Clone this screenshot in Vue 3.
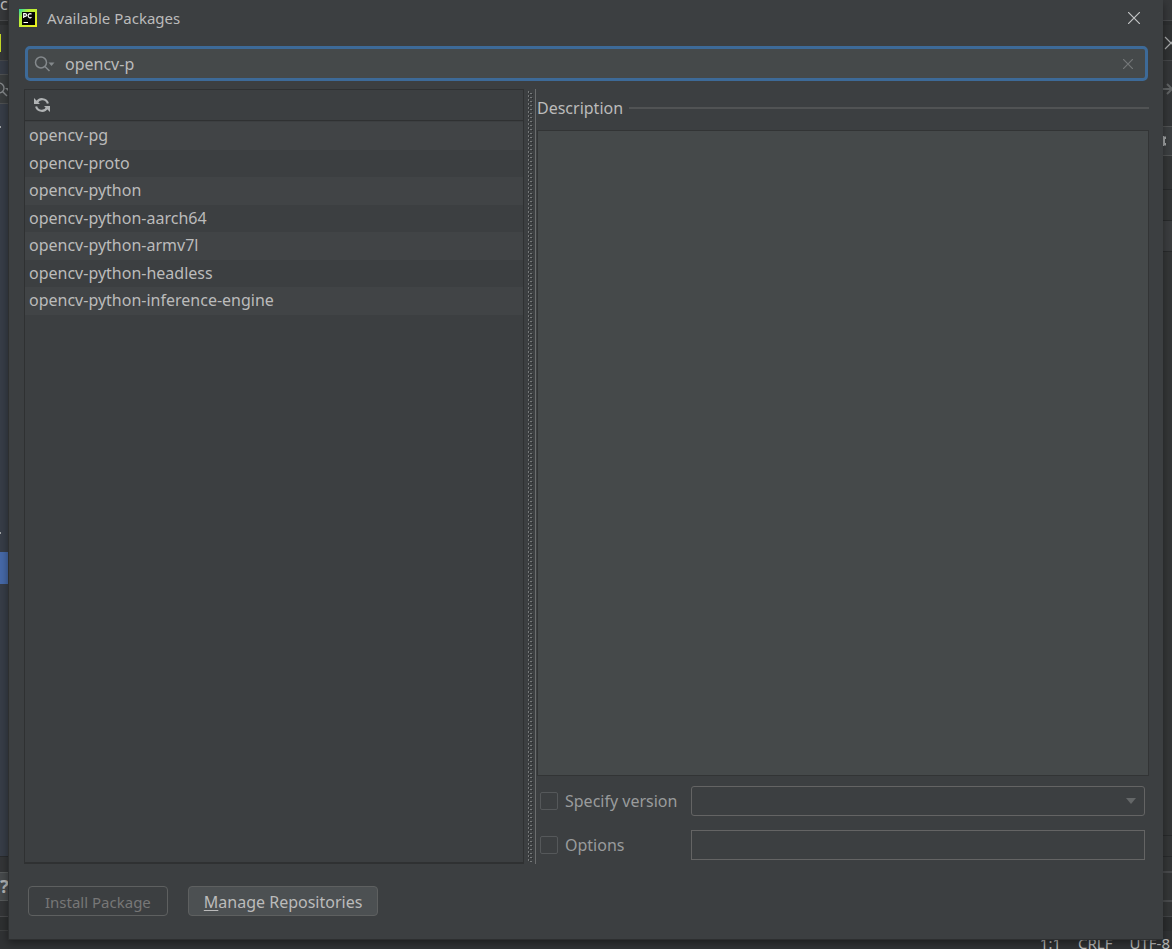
<script setup>
import { ref } from 'vue'

const query = ref('opencv-p')
const packages = [
  'opencv-pg',
  'opencv-proto',
  'opencv-python',
  'opencv-python-aarch64',
  'opencv-python-armv7l',
  'opencv-python-headless',
  'opencv-python-inference-engine',
]
</script>

<template>
  <div class="screen">
    <div class="backdrop" aria-hidden="true">
      <div class="back-main">
        <div class="edge left">
          <div class="l-title">c</div>
          <div class="l-gap"></div>
          <div class="l-tab"><i class="logo-sliver"></i></div>
          <div class="l-space"></div>
          <div class="l-search">
            <svg width="14" height="20" viewBox="0 0 14 20" fill="none" stroke="#85898b" stroke-width="1.4">
              <circle cx="-1" cy="8" r="5" />
              <path d="M2.500 11.500L7 16" />
              <path d="M5 8h6l-3 3z" fill="#85898b" stroke="none" />
            </svg>
          </div>
          <div class="l-tree"><i class="dot"></i></div>
          <div class="l-tree2"><i class="dot"></i></div>
          <div class="l-selected"></div>
          <div class="l-rest"></div>
          <div class="l-help"><span>?</span></div>
          <div class="l-foot"></div>
        </div>
        <div class="edge right">
          <div class="r-title"></div>
          <div class="l-gap"></div>
          <div class="r-close">
            <svg width="9" height="14" viewBox="0 0 9 14" fill="none" stroke="#a8aaab" stroke-width="1.2"><path d="M2 1l6 6-6 6M8 7l4-4M8 7l4 4" /></svg>
          </div>
          <div class="r-arrow">
            <svg width="9" height="14" viewBox="0 0 9 14" fill="none" stroke="#606364" stroke-width="2"><path d="M0 7h9M4 2l5 5-5 5" /></svg>
          </div>
          <div class="r-gear">
            <svg width="6" height="12" viewBox="0 0 6 12" fill="#a5a8a9"><path d="M0 1h1l1 1 1-1v3H2v4h1v3L2 10l-1 1H0z" /></svg>
          </div>
          <div class="r-a"></div>
          <div class="r-b"></div>
          <div class="r-c"></div>
          <div class="r-d"></div>
          <div class="r-e"></div>
          <div class="r-f"></div>
          <div class="r-g"></div>
          <div class="r-h"></div>
          <div class="r-i"></div>
        </div>
      </div>
      <div class="status"><span>1:1</span><span>CRLF</span><span>UTF-8</span></div>
    </div>

    <main class="dialog">
      <header class="titlebar">
        <svg class="app-icon" width="18" height="18" viewBox="0 0 18 18">
          <defs>
            <linearGradient id="frame" x1="0" y1="0" x2="1" y2="1">
              <stop offset="0" stop-color="#21d7a9" />
              <stop offset=".3" stop-color="#b5ee3a" />
              <stop offset="1" stop-color="#f3f01c" />
            </linearGradient>
          </defs>
          <rect width="18" height="18" fill="url(#frame)" />
          <rect x="3" y="3" width="13" height="13" fill="#050505" />
          <path d="M4.700 9V4.700h1.500a1.300 1.300 0 0 1 0 2.600H4.700M12.500 5.200a2 2 0 1 0 0 2.900M4.500 13.500h4.500" fill="none" stroke="#fff" stroke-width="1.200" />
        </svg>
        <h1>Available Packages</h1>
        <button class="close" aria-label="Close">
          <svg width="12" height="12" viewBox="0 0 12 12" fill="none" stroke="#c3c5c6" stroke-width="1.200"><path d="M0 0l12 12M12 0L0 12" /></svg>
        </button>
      </header>

      <div class="search">
        <svg width="22" height="18" viewBox="0 0 22 18" fill="none" stroke="#84898c" stroke-width="1.500">
          <circle cx="7" cy="7.500" r="5.500" />
          <path d="M11 11.500l4.500 4.500" />
          <path d="M14.500 7.500h6l-3 3.500z" fill="#84898c" stroke="none" />
        </svg>
        <input v-model="query" aria-label="Search packages" type="text" />
        <button aria-label="Clear search" @click="query = ''">
          <svg width="10" height="10" viewBox="0 0 10 10" fill="none" stroke="#747778" stroke-width="1.200"><path d="M0 0l10 10M10 0L0 10" /></svg>
        </button>
      </div>

      <div class="body">
        <section class="packages">
          <div class="toolbar">
            <button aria-label="Reload">
              <svg width="16" height="16" viewBox="0 0 16 16" fill="none" stroke="#b0b3b4" stroke-width="2.200">
                <path d="M2.800 5.500A6 6 0 0 1 13.900 6.500M13.200 10.500A6 6 0 0 1 2.100 9.500" />
                <path d="M0 1v6h6zM16 15V9H10z" fill="#b0b3b4" stroke="none" />
              </svg>
            </button>
          </div>
          <ul>
            <li v-for="name in packages" :key="name">{{ name }}</li>
          </ul>
        </section>

        <div class="splitter">
          <svg width="6" height="100%">
            <defs>
              <pattern id="grip" width="6" height="4" patternUnits="userSpaceOnUse">
                <path d="M0 0h1v2H0zM2 2h2v1H2z" fill="#76797a" />
                <path d="M1 1h1v1H1zM4 3h1v1H4z" fill="#292b2c" />
              </pattern>
            </defs>
            <rect width="6" height="100%" fill="url(#grip)" />
          </svg>
        </div>

        <section class="details">
          <h2>Description</h2>
          <div class="description"></div>
          <div class="option">
            <input id="version" type="checkbox" disabled />
            <label for="version">Specify version</label>
            <div class="combo">
              <select aria-label="Version" disabled></select>
              <svg width="10" height="6" viewBox="0 0 10 6"><path d="M0 0h10L5 6z" fill="#646768" /></svg>
            </div>
          </div>
          <div class="option">
            <input id="options" type="checkbox" disabled />
            <label for="options">Options</label>
            <input class="field" type="text" aria-label="Options value" disabled />
          </div>
        </section>
      </div>

      <footer>
        <button class="install" disabled>Install Package</button>
        <button class="manage"><u>M</u>anage Repositories</button>
      </footer>
    </main>
  </div>
</template>

<style>
body {
  background: #313335;
}
</style>

<style scoped>
* {
  box-sizing: border-box;
}
.screen {
  display: grid;
  grid-template: minmax(0, 1fr) / minmax(0, 1fr);
  height: 100vh;
  overflow: hidden;
  color: #bbbbbb;
  font: 16px/24px "Noto Sans", "Open Sans", sans-serif;
}
button, input, select {
  font: inherit;
  color: inherit;
  margin: 0;
  padding: 0;
  border: 0;
  background: none;
}
svg {
  display: block;
  flex: none;
}
.backdrop, .dialog {
  grid-area: 1 / 1;
}
.backdrop {
  display: flex;
  flex-direction: column;
  overflow: hidden;
  background: #313335;
}
.back-main {
  flex: 1;
  min-height: 0;
  display: flex;
  justify-content: space-between;
}
.edge {
  display: flex;
  flex-direction: column;
  width: 9px;
  overflow: hidden;
}
.edge > div {
  flex: none;
  overflow: hidden;
}
.l-title {
  height: 21px;
  background: #37393b;
  border-bottom: 1px solid #484a4c;
  line-height: 8px;
}
.r-title {
  height: 21px;
  background: #36383a;
  border-bottom: 1px solid #484a4c;
}
.l-gap {
  height: 4px;
  background: #2d2f30;
}
.l-tab {
  height: 36px;
  padding-top: 9px;
  background: #343638;
  border-bottom: 1px solid #454749;
}
.logo-sliver {
  display: block;
  width: 1px;
  height: 18px;
  background: #c5d926;
}
.l-space {
  height: 13px;
  background: #363c46;
}
.l-search {
  height: 30px;
  padding-top: 5px;
  background: #3a3d3e;
  border: solid #4e5051;
  border-width: 1px 0;
}
.l-tree {
  height: 406px;
  padding-top: 22px;
  background: #373d47;
}
.l-tree2 {
  height: 42px;
  padding-top: 22px;
  background: #373d47;
}
.dot {
  display: block;
  width: 1px;
  height: 2px;
  background: #a0a3a6;
}
.l-selected {
  height: 32px;
  background: #4669a8;
}
.edge .l-rest {
  flex: 1;
  background: #373d47;
  border-bottom: 1px solid #292b2d;
}
.l-help {
  height: 60px;
  padding-top: 15px;
  background: #333537;
  border-bottom: 1px solid #48494b;
}
.l-help span {
  display: block;
  height: 29px;
  background: #46494b;
  border: solid #56595a;
  border-width: 1px 0;
  color: #b0b2b3;
  font-size: 18px;
  font-weight: 700;
  line-height: 27px;
}
.l-foot {
  height: 14px;
  background: #2d2f30;
  border-bottom: 1px solid #3e4041;
}
.r-close {
  height: 36px;
  padding-top: 11px;
  background: #303233;
  border-bottom: 1px solid #454749;
}
.r-arrow {
  height: 65px;
  padding-top: 21px;
  background: #343638;
}
.r-gear {
  height: 30px;
  padding-top: 8px;
  background: #3c3f41;
  border: solid #515354;
  border-width: 1px 0;
}
.r-a, .r-b, .r-c, .r-e, .r-f {
  border-bottom: 1px solid #292b2c;
  background: #343637;
}
.r-a {
  height: 34px;
}
.r-b {
  height: 31px;
}
.r-c {
  height: 31px;
  background: #3b3d3f;
}
.edge .r-d {
  flex: 1;
  background: #343637;
}
.r-e {
  height: 1px;
}
.r-f {
  height: 21px;
}
.r-g {
  height: 16px;
  border-bottom: 2px solid #484a4c;
  background: #343637;
}
.r-h {
  height: 29px;
  border-bottom: 2px solid #4a4c4e;
  background: #343637;
}
.r-i {
  height: 29px;
  background: linear-gradient(#343637 14px, #434547 14px, #434547 15px, #2c2e2f 15px);
}
.status {
  display: flex;
  justify-content: flex-end;
  gap: 17px;
  height: 18px;
  padding-right: 2px;
  background: #303234;
  font-size: 15px;
  line-height: 24px;
}
.dialog {
  display: flex;
  flex-direction: column;
  min-height: 0;
  margin: 0 9px 9px 8px;
  padding: 0 14px 0 15px;
  background: #3c3f41;
  border: solid #2d2f30;
  border-width: 0 0 1px 1px;
  box-shadow: 0 3px 8px #0006;
}
.titlebar {
  display: flex;
  align-items: center;
  height: 36px;
  margin: 0 3px 10px -5px;
}
h1 {
  flex: 1;
  margin: 0 0 0 10px;
  font-size: 15px;
  font-weight: 400;
}
.close {
  padding: 6px;
}
.search {
  display: flex;
  align-items: center;
  height: 35px;
  margin: 0 1px 8px;
  padding: 0 12px 0 6px;
  background: #45494a;
  border: 3px solid #3d6a98;
  border-radius: 5px;
}
.search input {
  flex: 1;
  min-width: 0;
  margin-left: 9px;
  outline: 0;
}
.body {
  flex: 1;
  min-height: 0;
  display: flex;
}
.packages {
  flex: none;
  width: 500px;
  border: 1px solid #2f3132;
  border-bottom-width: 2px;
}
.toolbar {
  display: flex;
  align-items: center;
  height: 31px;
  padding: 0 9px;
  border-bottom: 1px solid #2f3132;
}
ul {
  margin: 0;
  padding: 1px 0 0;
  list-style: none;
}
li {
  height: 27px;
  padding-left: 4px;
  line-height: 27px;
}
li:nth-child(odd) {
  height: 28px;
  background: #414446;
}
.splitter {
  flex: none;
  width: 12px;
  padding: 2px 0 2px 4px;
  border-right: 1px solid #6a6c6d;
}
.details {
  flex: 1;
  min-width: 0;
  display: flex;
  flex-direction: column;
  padding-left: 1px;
}
h2 {
  display: flex;
  align-items: center;
  gap: 6px;
  margin: 7px 0 10px;
  font-size: 16px;
  font-weight: 400;
}
h2::after {
  content: "";
  flex: 1;
  height: 2px;
  background: #515354;
}
.description {
  flex: 1;
  background: #45494a;
  border: 1px solid #323435;
}
.option {
  display: flex;
  align-items: center;
  height: 30px;
  margin: 10px 4px 0 3px;
  color: #999b9c;
}
.option + .option {
  margin: 14px 4px 4px 3px;
}
.option input[type="checkbox"] {
  appearance: none;
  width: 18px;
  height: 18px;
  border: 1px solid #55585a;
  border-radius: 2px;
}
.option label {
  width: 119px;
  margin: 0 7px;
}
.combo, .field {
  flex: 1;
  min-width: 0;
  height: 30px;
  border: 1px solid #646464;
}
.option .field {
  border: 1px solid #646464;
}
.combo {
  display: flex;
  align-items: center;
  padding-right: 8px;
  border-radius: 3px;
}
.combo select {
  flex: 1;
  height: 28px;
  appearance: none;
}
footer {
  display: flex;
  gap: 20px;
  padding: 22px 4px 23px;
}
footer button {
  height: 30px;
  padding: 2px 15px 0;
  border: 1px solid #5e6060;
  border-radius: 4px;
}
.install {
  padding: 2px 16px 0;
  color: #777777;
  font-size: 15px;
}
.manage {
  background: #4c5052;
}
u {
  text-underline-offset: 2px;
}
</style>
